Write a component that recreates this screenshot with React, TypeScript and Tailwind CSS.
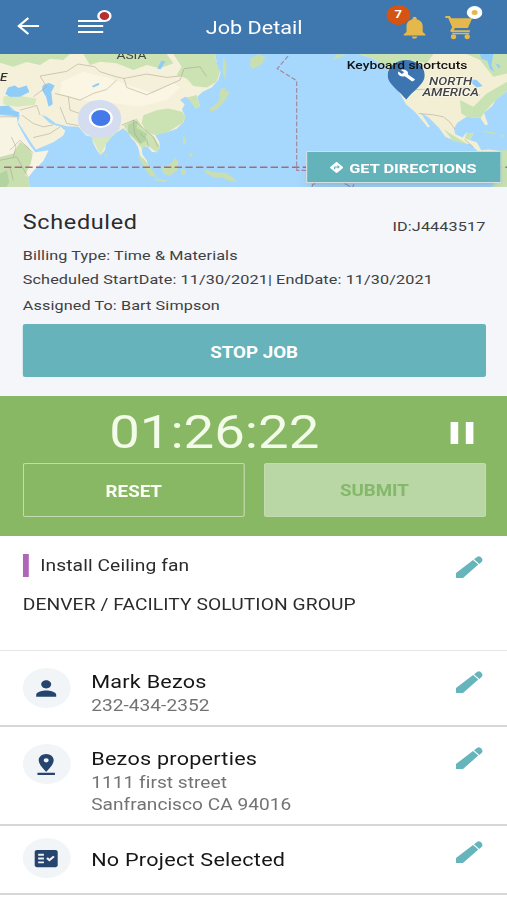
import type { ReactNode } from 'react';
import {
  MdBuild,
  MdDirections,
  MdFactCheck,
  MdNotifications,
  MdPause,
  MdPerson,
  MdPinDrop,
} from 'react-icons/md';

interface DetailRowProps {
  icon: ReactNode;
  title: string;
  lines?: string[];
  className: string;
  titleClass: string;
}

const CartIcon = () => (
  <svg className="h-[23.5px] w-[22.5px]" viewBox="0 0 81 71" preserveAspectRatio="none" fill="#e5b84b">
    <path d="M0 0H14L18 7H81L68 36H29L26 43H74V49H22C17 49 14 46 16 42L21 34 9 6H0ZM21 51H72V55H21Z" />
    <ellipse cx="25" cy="63" rx="8" ry="7.5" />
    <ellipse cx="66" cy="63" rx="8" ry="7.5" />
  </svg>
);

const Header = () => (
  <header className="relative flex h-[54px] items-center bg-[#3f77af] text-white">
    <svg className="-mt-[3px] ml-[14px] h-[18px] w-[19px]" viewBox="0 0 19 18" fill="none" stroke="white" strokeWidth="1.9">
      <path d="M9.6 1 1.6 9l8 8M1.8 9H18.6" />
    </svg>
    <div className="relative -mt-0.5 ml-[31.5px] flex w-[21px] flex-col gap-[3.5px]">
      <span className="h-[2px] bg-white" />
      <span className="h-[2px] bg-white" />
      <span className="h-[2px] bg-white" />
      <span className="absolute -top-[10px] left-[16.5px] h-[12px] w-[12px] rounded-full border-2 border-white bg-[#b5302e]" />
    </div>
    <h1 className="ml-[86px] mt-0.5 text-[18px] leading-[24px]">Job Detail</h1>
    <div className="absolute left-[332px] top-[14px]">
      <MdNotifications className="h-[27px] w-[27px] text-[#e5b84b]" />
      <span className="absolute -left-[10px] -top-[9px] flex h-[20px] w-[20px] items-center justify-center rounded-full bg-[#d35413] pt-px text-[11px] font-bold">
        7
      </span>
    </div>
    <div className="absolute left-[371px] top-[16px]">
      <CartIcon />
      <span className="absolute left-[18px] -top-[10px] flex h-[13px] w-[13px] items-center justify-center rounded-full bg-white">
        <span className="h-[5px] w-[5px] rounded-full bg-[#e5b84b]" />
      </span>
    </div>
  </header>
);

const WorldMap = () => (
  <svg className="block h-full w-full" viewBox="0 162 1521 398" preserveAspectRatio="none">
    <rect y="162" width="1521" height="398" fill="#a6d8fd" />
    {/* Europe and Asia */}
    <path
      fill="#f5f0d9"
      d="M0 162H645L650 185 640 196 662 215 655 240 635 262 608 275 592 290 600 318 586 325 572 300 556 290 540 300 554 312 546 328 556 350 550 366 530 386 505 395 480 400 466 406 478 425 480 442 470 456 456 455 442 438 425 442 427 462 440 480 444 492 430 484 420 464 414 440 404 424 394 414 384 396 370 384 350 396 335 410 318 430 315 450 302 464 292 452 280 430 275 410 258 406 235 380 200 378 168 370 140 350 124 344 148 368 168 376 180 378 196 392 190 406 160 426 108 448 94 428 76 400 54 366 60 345 30 318 0 320Z"
    />
    {/* Africa */}
    <path fill="#f8f4e4" d="M0 345 50 350 54 372 74 410 92 438 106 456 146 450 130 482 100 512 84 532 90 560H0Z" />
    <path fill="#c9dfb0" d="M0 470 40 460 60 425 84 440 98 462 92 490 76 524 84 532 90 560H0Z" />
    {/* forests */}
    <g fill="#cbe2b2">
      <path d="M0 162H210L190 180 150 176 120 195 80 186 40 200 0 188Z" />
      <path d="M250 162H500L520 190 480 205 440 195 400 210 350 190 300 185 270 195Z" />
      <path d="M520 162H645L650 190 660 215 650 245 620 262 580 258 560 235 530 225 545 200Z" />
      <path d="M430 345 470 330 505 325 546 335 556 350 548 368 505 395 466 405 440 395 425 370Z" />
      <path d="M370 375 410 355 430 385 462 410 480 440 470 456 442 435 427 445 410 425 390 405Z" />
      <path d="M10 290 40 284 110 296 104 314 50 320 10 312Z" opacity=".7" />
      <path d="M272 408 310 400 365 380 335 410 318 430 302 464Z" opacity=".7" />
      <path d="M560 292 590 285 600 318 586 325 572 305Z" />
    </g>
    <path fill="#a9cf9b" d="M385 372 412 362 410 384 440 400 436 424 420 430 400 410 384 396ZM0 520 20 510 28 545 20 560H0Z" opacity=".7" />
    <path fill="#fbf6e4" d="M185 245 250 215 330 235 370 250 460 280 520 250 540 262 500 300 420 320 350 310 250 300 180 280Z" />
    {/* inland seas */}
    <g fill="#8fcdf8">
      <path d="M16 282 24 262 44 256 56 264 80 256 88 276 60 290 30 290ZM128 256 146 248 164 256 154 276 158 312 146 320 138 290 126 270Z" />
      <path d="M0 318 26 316 34 330 58 336 54 350 30 344 0 342ZM472 206 484 182 496 184 482 208ZM276 258 296 248 298 254 280 262Z" />
    </g>
    {/* islands */}
    <g fill="#c9dfb0">
      <path d="M628 326 650 310 664 286 678 272 690 276 672 306 650 328 632 334ZM656 290 662 268 674 262 684 282ZM670 165 680 195 676 240 668 220ZM752 175 775 162 796 170 786 192 758 208 750 195Z" />
      <path d="M412 462 432 476 456 506 470 532 448 524 430 498ZM464 534 500 540 498 546 466 540ZM484 502 508 494 524 474 536 484 530 512 510 526 490 520ZM542 508 556 506 556 520 546 524ZM612 506 640 516 680 518 712 544 690 542 668 532 640 530 620 520ZM548 410 556 412 558 432 550 430ZM568 456 580 462 572 472ZM314 460 324 464 320 470Z" />
      <path d="M998 180 1040 165 1010 162ZM1448 390 1486 398 1484 403 1450 394ZM1494 402 1514 406 1510 412Z" />
    </g>
    {/* North America */}
    <path
      fill="#f3efd4"
      d="M1076 162H1521V274L1486 300 1478 316 1452 338 1464 372 1456 376 1442 354 1400 350 1372 368 1362 386 1366 402 1388 412 1398 398 1420 400 1410 420 1430 426 1444 450 1466 448 1500 452 1500 464 1440 458 1410 432 1370 424 1336 410 1318 384 1286 352 1262 338 1290 380 1284 382 1246 336 1218 312 1200 280 1176 236 1160 204 1120 176Z"
    />
    <g fill="#c9e2b4">
      <path d="M1076 162H1300L1280 190 1230 180 1210 240 1176 236 1160 204 1120 176Z" />
      <path d="M1380 300 1420 320 1460 280 1521 245V274L1486 300 1452 338 1442 354 1400 350 1384 340ZM1400 162 1440 180 1480 230 1521 220V162ZM1400 398 1420 400 1410 420 1394 414ZM1330 385 1350 400 1400 430 1360 424Z" />
      <path d="M1500 450H1521V560H1478L1490 530 1484 500 1494 470Z" />
    </g>
    <g fill="#8fcdf8">
      <path d="M1440 162H1480L1474 196 1484 216 1470 206 1462 182 1444 176ZM1400 236 1430 240 1448 258 1430 262ZM1486 190 1500 196 1498 208Z" />
    </g>
    {/* borders */}
    <g fill="none" stroke="#a79b8c" strokeWidth="2" opacity=".75">
      <path d="M100 290 140 260 120 228 200 214 234 192 284 200 300 215 348 230 372 235 440 222 500 232 540 228M372 235 380 262 440 284 490 262 540 240 552 206 600 200 620 230" />
      <path d="M165 280 205 290 240 300 280 280 320 268 350 240M205 290 210 330 250 344 270 320 300 300M60 330 110 316 120 345M66 345 100 370 130 380 160 374M0 350 50 350M180 320 200 370 235 376M100 412 150 400 180 380" />
      <path d="M365 375 400 360 430 384 460 410 474 440M400 360 404 400 424 430M420 400 440 418 446 440M30 450 60 420 100 458M0 480 50 470 84 530M40 470 48 440 34 410M30 500 40 540" />
      <path d="M1256 340 1300 344 1330 350 1350 366 1364 386M1200 270 1400 264 1440 286M1394 418 1420 440" />
    </g>
    {/* equator and date line */}
    <g fill="none" stroke="#a56a7c" strokeWidth="4" strokeDasharray="22 10">
      <path d="M12 501H1521" />
      <path d="M864 168 832 206 890 242V510H920" strokeWidth="3.5" strokeDasharray="14 6" opacity=".75" />
      <path d="M936 560 938 552 946 550M1034 550 1046 556 1050 560M1058 560 1062 552" strokeWidth="3" strokeDasharray="none" opacity=".8" />
    </g>
  </svg>
);

const MapPanel = () => (
  <div className="relative h-[133px] overflow-hidden">
    <WorldMap />
    <span className="absolute -top-[6px] left-[97px] text-[11.5px] leading-[14px] text-[#444]">ASIA</span>
    <span className="absolute left-0 top-[17px] text-[11px] font-medium italic leading-[14px] text-[#333]">E</span>
    <span className="absolute left-[65px] top-[45.5px] h-[38px] w-[36px] rounded-full bg-[#d4dcef]" />
    <span className="absolute left-[73.5px] top-[54px] h-[20px] w-[20px] rounded-full border-2 border-white bg-[#4479ea]" />
    <svg className="absolute left-[322.5px] top-[6px] h-[40px] w-[31px]" viewBox="0 0 31 40">
      <path fill="#3c75b0" d="M15.5 39.5C10 31 0 24 0 15.5a15.5 15.5 0 0 1 31 0C31 24 21 31 15.5 39.5Z" />
    </svg>
    <MdBuild className="absolute left-[330.5px] top-[14.5px] h-[13px] w-[15.5px] text-white" preserveAspectRatio="none" />
    <span className="absolute left-[289px] top-[4px] whitespace-nowrap text-[11.5px] font-medium leading-[14px] text-[#111]">
      Keyboard shortcuts
    </span>
    <div className="absolute left-[350.5px] top-[23px] flex w-[50px] flex-col items-center text-[11.2px] font-medium italic leading-[10.5px] text-[#444] [text-shadow:0_0_2px_white,0_0_2px_white]">
      <span>NORTH</span>
      <span>AMERICA</span>
    </div>
    <button className="absolute left-[254.5px] top-[97px] flex h-[32px] w-[163px] items-center border border-[#d3dfe0] bg-[#64b3bb] pl-[18px] text-white shadow-lg">
      <MdDirections className="h-[13px] w-[13px]" />
      <span className="ml-[4.5px] mt-0.5 whitespace-nowrap text-[13.6px] font-bold leading-[18px]">GET DIRECTIONS</span>
    </button>
  </div>
);

const JobSummary = () => (
  <section className="h-[209px] bg-[#f4f6fa] pl-[19px] pr-[18px] pt-[21px] text-[13.5px] leading-[24px] tracking-[0.09px] text-[#3f4042]">
    <div className="flex justify-between leading-[30px]">
      <h2 className="text-[19.5px] tracking-[0.55px] text-[#2b2c2e]">Scheduled</h2>
      <span className="mt-[3px] h-[27px]">ID:J4443517</span>
    </div>
    <p className="mt-[5px] whitespace-nowrap">Billing Type: Time &amp; Materials</p>
    <p className="whitespace-nowrap">Scheduled StartDate: 11/30/2021| EndDate: 11/30/2021</p>
    <p className="mt-0.5 whitespace-nowrap">Assigned To: Bart Simpson</p>
    <button className="mt-[7px] flex h-[53px] w-full items-center justify-center rounded-[2px] bg-[#66b3bb] pt-[4px] text-[15.6px] font-bold tracking-normal text-white">
      STOP JOB
    </button>
  </section>
);

const Timer = () => (
  <section className="h-[140px] bg-[#88b864] pl-[19px] pr-[18px] pt-[10px]">
    <div className="flex h-[57px] items-start">
      <span className="ml-[72px] mt-px w-[175px] whitespace-nowrap text-[45.4px] leading-[52px] text-[#f3fbe9]">01:26:22</span>
      <MdPause className="ml-[100px] mt-[8px] h-[38px] w-[38px] shrink-0 text-white" />
    </div>
    <div className="flex gap-[15.5px] text-[15.6px] font-bold">
      <button className="flex h-[54px] flex-1 items-center justify-center rounded-[2px] border border-[#c3dbb0] pt-[5px] text-[#fbfff6]">
        RESET
      </button>
      <button className="flex h-[54px] flex-1 items-center justify-center rounded-[2px] border border-[#c3dbb0] bg-[#b9d6a5] pt-[3px] text-[#84b86a]">
        SUBMIT
      </button>
    </div>
  </section>
);

const EditButton = () => (
  <button className="mt-[3px] flex shrink-0 self-start">
    <svg className="h-[22px] w-[22.5px]" viewBox="0 0 81 67" preserveAspectRatio="none" fill="#66b5bc">
      <path d="M0 52 51 12 67 26 21 67H0ZM54 10 63 3Q69-1 74 3L79 8Q83 12 79 16L70 24Z" />
    </svg>
  </button>
);

const JobTask = () => (
  <section className="flex h-[115px] justify-between border-b border-[#e4e6e8] pl-[19px] pr-[20.5px] pt-[17px] text-[#2b2b2d]">
    <div className="whitespace-nowrap text-[16px] leading-[24px]">
      <div className="flex items-start">
        <span className="mt-[0.5px] h-[23px] w-[5px] bg-[#b066b8]" />
        <span className="ml-[9.5px] mt-px tracking-[0.08px]">Install Ceiling fan</span>
      </div>
      <p className="mt-[15px] tracking-[0.08px]">DENVER / FACILITY SOLUTION GROUP</p>
    </div>
    <EditButton />
  </section>
);

const DetailRow = ({ icon, title, lines = [], className, titleClass }: DetailRowProps) => (
  <section className={`flex items-start border-b-2 border-[#d6d7d8] pl-[19px] pr-[20.5px] ${className}`}>
    <div className="flex h-[40px] w-[40px] shrink-0 items-center justify-center rounded-full bg-[#f2f5f7] pr-px text-[#25456f]">
      {icon}
    </div>
    <div className={`ml-[17px] flex-1 whitespace-nowrap ${titleClass}`}>
      <h3 className="text-[18px] leading-[26px] tracking-[0.2px] text-[#161618]">{title}</h3>
      {lines.map((line) => (
        <p key={line} className="text-[15.9px] leading-[22px] tracking-[0.04px] text-[#737376]">{line}</p>
      ))}
    </div>
    <EditButton />
  </section>
);

export default function App() {
  return (
    <div className="h-[900px] w-[507px] overflow-hidden bg-white">
      {/* the whole screen is drawn on a narrower canvas and widened */}
      <main className="w-[422.5px] origin-top-left scale-x-[1.2] font-['Roboto',sans-serif]">
        <Header />
        <MapPanel />
        <JobSummary />
        <Timer />
        <JobTask />
        <DetailRow
          icon={<MdPerson className="h-[25px] w-[25px]" />}
          title="Mark Bezos"
          lines={['232-434-2352']}
          className="h-[76px] pt-[17px]"
          titleClass="mt-px"
        />
        <DetailRow
          icon={<MdPinDrop className="h-[25px] w-[25px]" />}
          title="Bezos properties"
          lines={['1111 first street', 'Sanfrancisco CA 94016']}
          className="h-[99px] pt-[17px]"
          titleClass="mt-0.5"
        />
        <DetailRow
          icon={<MdFactCheck className="h-[23px] w-[23px]" />}
          title="No Project Selected"
          className="h-[69px] pt-[12px]"
          titleClass="mt-[9px]"
        />
      </main>
    </div>
  );
}
